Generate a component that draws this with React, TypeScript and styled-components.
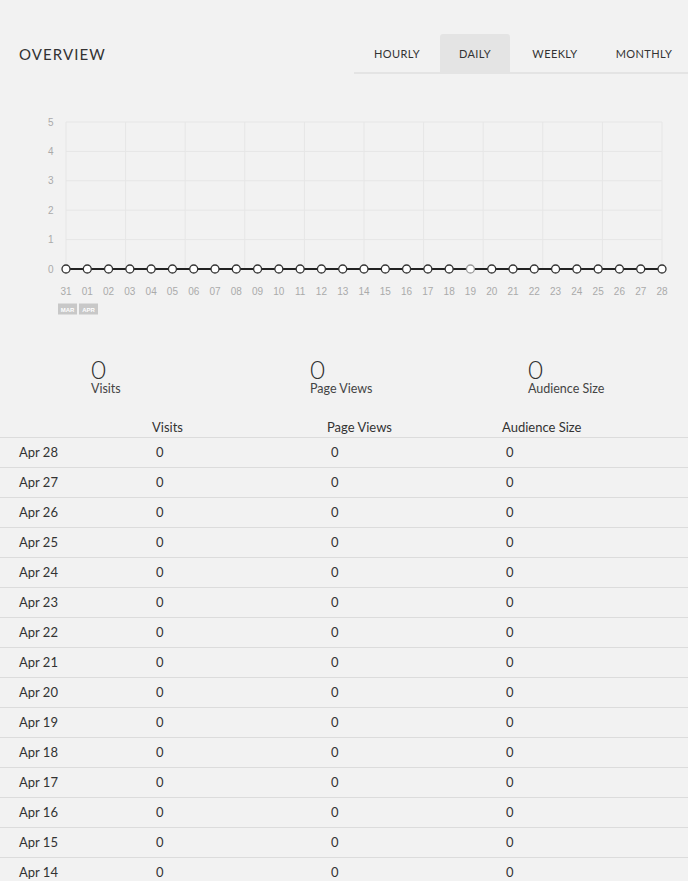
import React from "react";
import styled, { createGlobalStyle } from "styled-components";

const GlobalStyle = createGlobalStyle`
  html, body {
    margin: 0;
    padding: 0;
    background: #f2f2f2;
  }
  body {
    font-family: Lato, "Open Sans", Arial, sans-serif;
    color: #333;
  }
`;

const tabs = [
  { label: "Hourly", width: 86 },
  { label: "Daily", width: 70 },
  { label: "Weekly", width: 90 },
  { label: "Monthly", width: 88 },
];
const days = ["31", ...Array.from({ length: 28 }, (_, i) => String(i + 1).padStart(2, "0"))];
const rows = Array.from({ length: 28 }, (_, i) => `Apr ${28 - i}`);
const stats = ["Visits", "Page Views", "Audience Size"];

// chart geometry
const left = 66;
const right = 662;
const top = 12;
const base = 159;
const step = (right - left) / (days.length - 1);
const rowH = (base - top) / 5;

const Chart: React.FC = () => (
  <ChartSvg width="688" height="215" viewBox="0 0 688 215">
    {[0, 1, 2, 3, 4, 5].map((v) => (
      <g key={v}>
        {v > 0 && (
          <line x1={left} x2={right} y1={base - v * rowH} y2={base - v * rowH} stroke="#e6e6e6" />
        )}
        <text x="53.5" y={base - v * rowH + 3.5} textAnchor="end" className="axis">
          {v}
        </text>
      </g>
    ))}
    {Array.from({ length: 11 }, (_, i) => left + (i * (right - left)) / 10).map((x) => (
      <line key={x} x1={x} x2={x} y1={top} y2={base} stroke="#e6e6e6" />
    ))}
    <line x1={left} x2={right} y1={base} y2={base} stroke="#222" strokeWidth="2" />
    {days.map((d, i) => (
      <g key={d}>
        <circle
          cx={left + i * step}
          cy={base}
          r="4"
          fill="#fff"
          stroke={d === "19" ? "#999" : "#333"}
          strokeWidth="1.3"
        />
        <text
          x={left + i * step}
          y={base + 25.5}
          textAnchor="middle"
          className="axis"
          fill={d === "11" ? "#a3b3cc" : undefined}
        >
          {d}
        </text>
      </g>
    ))}
    <rect x="58" y="193.5" width="19" height="11" fill="#c8c8c8" />
    <text x="67.5" y="201.5" textAnchor="middle" className="badge">
      MAR
    </text>
    <rect x="79" y="193.5" width="19" height="11" fill="#c8c8c8" />
    <text x="88.5" y="201.5" textAnchor="middle" className="badge">
      APR
    </text>
  </ChartSvg>
);

const App: React.FC = () => (
  <Page>
    <GlobalStyle />
    <Header>
      <Title>Overview</Title>
      <TabBar>
        {tabs.map((t) => (
          <Tab key={t.label} $width={t.width} $active={t.label === "Daily"}>
            {t.label}
          </Tab>
        ))}
      </TabBar>
    </Header>

    <Chart />

    <Stats>
      {stats.map((s) => (
        <Stat key={s}>
          <StatValue>0</StatValue>
          <StatLabel>{s}</StatLabel>
        </Stat>
      ))}
    </Stats>

    <Table>
      <HeadRow>
        <span />
        {stats.map((s) => (
          <HeadCell key={s}>{s}</HeadCell>
        ))}
      </HeadRow>
      {rows.map((r) => (
        <Row key={r}>
          <DateCell>{r}</DateCell>
          <Cell>0</Cell>
          <Cell>0</Cell>
          <Cell>0</Cell>
        </Row>
      ))}
    </Table>
  </Page>
);

const Page = styled.div`
  width: 688px;
  padding-top: 34px;
`;

const Header = styled.header`
  display: flex;
  justify-content: space-between;
  align-items: stretch;
  height: 40px;
`;

const Title = styled.h1`
  margin: 0;
  padding-left: 19px;
  align-self: center;
  margin-top: -1px;
  font-size: 15px;
  font-weight: 400;
  letter-spacing: 1.1px;
  text-transform: uppercase;
  color: #333;
`;

const TabBar = styled.nav`
  display: flex;
  width: 334px;
  border-bottom: 2px solid #e4e4e4;
`;

const Tab = styled.div<{ $active?: boolean; $width: number }>`
  flex: none;
  width: ${(p) => p.$width}px;
  display: flex;
  align-items: center;
  justify-content: center;
  font-size: 11px;
  letter-spacing: 0.4px;
  text-transform: uppercase;
  color: #333;
  border-radius: 3px 3px 0 0;
  background: ${(p) => (p.$active ? "#e4e4e4" : "transparent")};
`;

const ChartSvg = styled.svg`
  display: block;
  margin-top: 36px;

  .axis {
    font-family: "Liberation Sans", Arial, sans-serif;
    font-size: 10px;
    fill: #aaa;
  }
  .badge {
    font-family: "Liberation Sans", Arial, sans-serif;
    font-size: 6px;
    font-weight: 700;
    fill: #fff;
  }
`;

const Stats = styled.section`
  display: grid;
  grid-template-columns: 219px 218px 1fr;
  padding-left: 91px;
  margin-top: 31px;
`;

const Stat = styled.div`
  display: flex;
  flex-direction: column;
`;

const StatValue = styled.div`
  font-size: 26px;
  font-weight: 300;
  line-height: 26px;
  color: #333;
`;

const StatLabel = styled.div`
  margin-top: 0;
  font-size: 12.5px;
  line-height: 14px;
  color: #444;
`;

const Table = styled.div`
  margin-top: 21px;
`;

const HeadRow = styled.div`
  display: grid;
  grid-template-columns: 152px 175px 175px 1fr;
  height: 20px;
  line-height: 20px;
  border-bottom: 1px solid #dcdcdc;
`;

const HeadCell = styled.span`
  font-size: 13px;
  color: #333;
`;

const Row = styled.div`
  display: grid;
  grid-template-columns: 152px 175px 175px 1fr;
  height: 30px;
  box-sizing: border-box;
  padding-bottom: 1px;
  align-items: center;
  border-bottom: 1px solid #dcdcdc;
  font-size: 13px;
  color: #333;
`;

const DateCell = styled.span`
  padding-left: 19px;
`;

const Cell = styled.span`
  padding-left: 4px;
`;

export default App;
